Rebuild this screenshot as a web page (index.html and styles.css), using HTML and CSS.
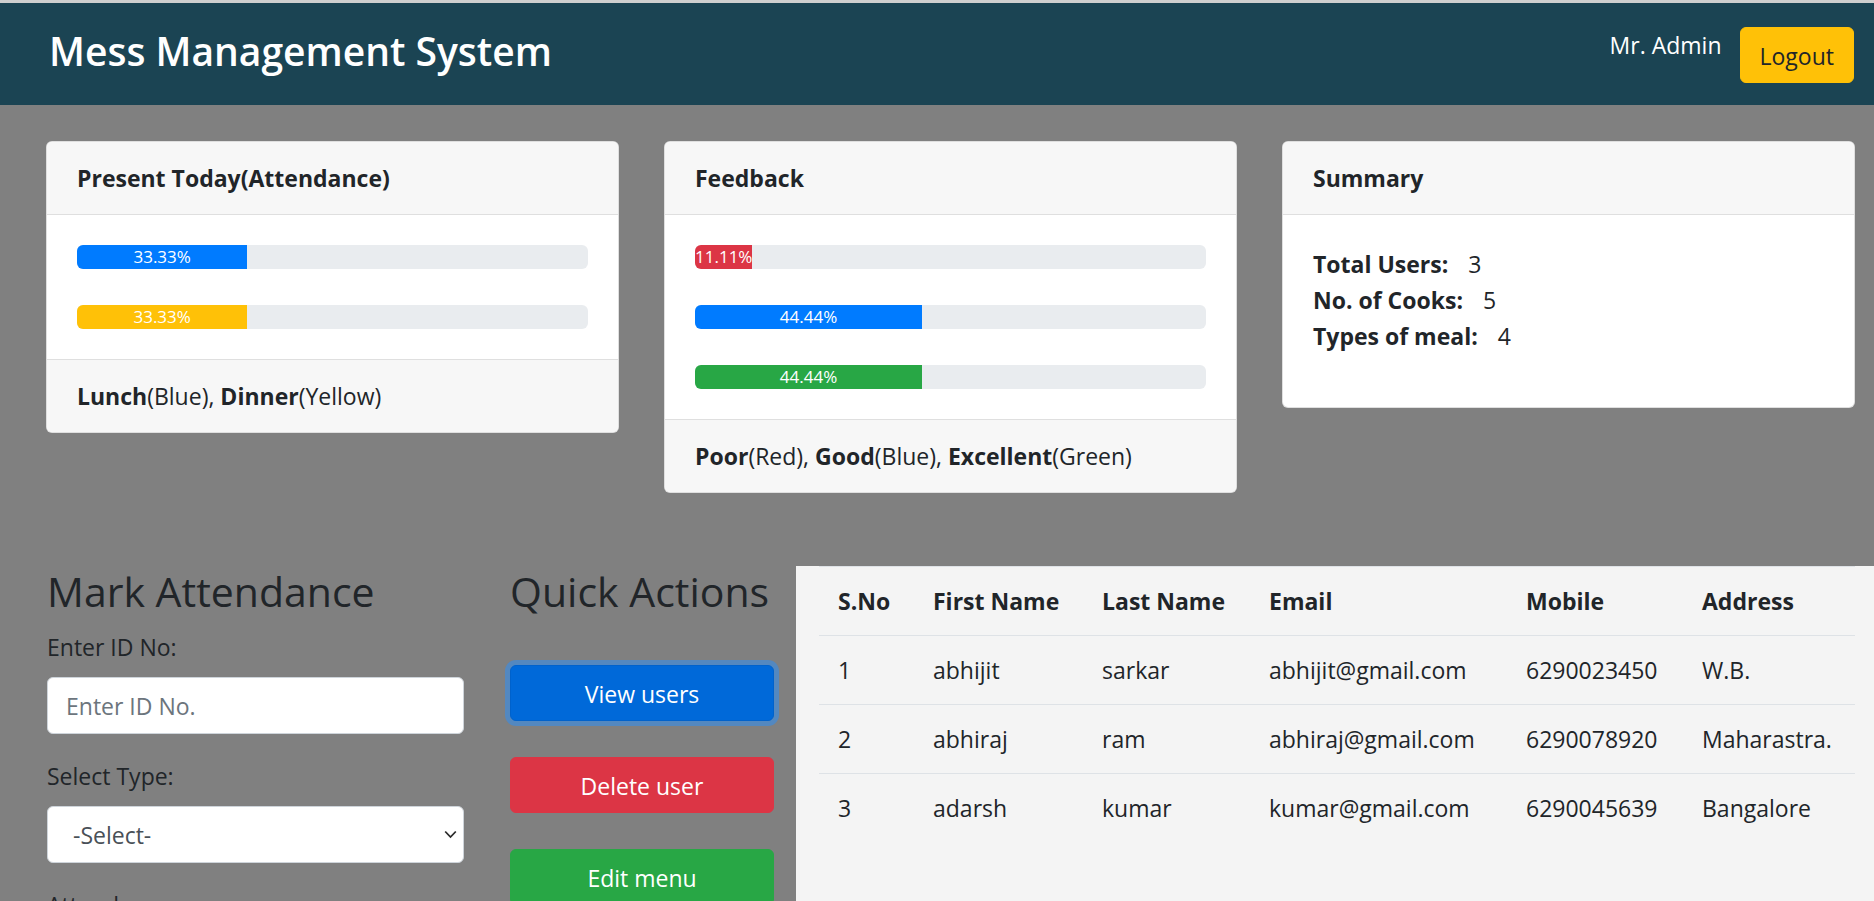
FILE: index.html
```html
<!DOCTYPE html>
<html lang="en">
<head>
<meta charset="utf-8">
<title>Mess Management System</title>
<link rel="stylesheet" href="styles.css">
</head>
<body>
<nav class="topbar">
  <div class="brand">Mess Management System</div>
  <div class="nav-right">
    <span class="admin">Mr. Admin</span>
    <button class="btn btn-warning">Logout</button>
  </div>
</nav>

<main class="page">
  <section class="cards">
    <div class="card">
      <div class="card-header">Present Today(Attendance)</div>
      <div class="card-body">
        <div class="progress"><div class="bar bar-blue" style="width:33.33%">33.33%</div></div>
        <div class="progress"><div class="bar bar-yellow" style="width:33.33%">33.33%</div></div>
      </div>
      <div class="card-footer"><b>Lunch</b>(Blue), <b>Dinner</b>(Yellow)</div>
    </div>

    <div class="card">
      <div class="card-header">Feedback</div>
      <div class="card-body">
        <div class="progress"><div class="bar bar-red" style="width:11.11%">11.11%</div></div>
        <div class="progress"><div class="bar bar-blue" style="width:44.44%">44.44%</div></div>
        <div class="progress"><div class="bar bar-green" style="width:44.44%">44.44%</div></div>
      </div>
      <div class="card-footer"><b>Poor</b>(Red), <b>Good</b>(Blue), <b>Excellent</b>(Green)</div>
    </div>

    <div class="card">
      <div class="card-header">Summary</div>
      <div class="card-body">
        <p class="stats">
          <span class="stat"><b class="stat-label">Total Users:</b>3</span>
          <span class="stat"><b class="stat-label">No. of Cooks:</b>5</span>
          <span class="stat"><b class="stat-label">Types of meal:</b>4</span>
        </p>
      </div>
    </div>
  </section>

  <section class="lower">
    <div class="attendance">
      <h2 class="heading">Mark Attendance</h2>
      <label class="label" for="idno">Enter ID No:</label>
      <input class="field" id="idno" type="text" placeholder="Enter ID No.">
      <label class="label" for="type">Select Type:</label>
      <div class="select-wrap">
        <select class="field select" id="type"><option>-Select-</option></select>
        <svg class="chev" width="13" height="9" viewBox="0 0 13 9"><polyline points="1.2,1.5 6.5,7 11.8,1.5" fill="none" stroke="#2b2b2b" stroke-width="1.8"/></svg>
      </div>
      <label class="label">Attendance:</label>
    </div>

    <div class="actions">
      <h2 class="heading">Quick Actions</h2>
      <button class="btn btn-primary is-focused">View users</button>
      <button class="btn btn-danger">Delete user</button>
      <button class="btn btn-success">Edit menu</button>
    </div>

    <div class="table-panel">
      <table class="users">
        <colgroup>
          <col class="c-sno"><col class="c-first"><col class="c-last"><col class="c-email"><col class="c-mobile"><col class="c-addr">
        </colgroup>
        <thead>
          <tr><th>S.No</th><th>First Name</th><th>Last Name</th><th>Email</th><th>Mobile</th><th>Address</th></tr>
        </thead>
        <tbody>
          <tr><td>1</td><td>abhijit</td><td>sarkar</td><td>abhijit@gmail.com</td><td>6290023450</td><td>W.B.</td></tr>
          <tr><td>2</td><td>abhiraj</td><td>ram</td><td>abhiraj@gmail.com</td><td>6290078920</td><td>Maharastra.</td></tr>
          <tr><td>3</td><td>adarsh</td><td>kumar</td><td>kumar@gmail.com</td><td>6290045639</td><td>Bangalore</td></tr>
        </tbody>
      </table>
    </div>
  </section>
</main>
</body>
</html>
```

FILE: styles.css
```css
* { box-sizing: border-box; }

html, body {
  margin: 0;
  padding: 0;
}

body {
  background: #808080;
  font-family: "Open Sans", "Noto Sans", sans-serif;
  font-size: 23px;
  line-height: 36px;
  color: #212529;
  overflow: hidden;
}

/* ---------- top bar ---------- */
.topbar {
  height: 105px;
  border-top: 3px solid #cfcfcf;
  background: #1b4453;
  display: flex;
  justify-content: space-between;
  align-items: flex-start;
  padding: 24px 20px 0 49px;
}

.brand {
  color: #fff;
  font-size: 39px;
  font-weight: 600;
  line-height: 48px;
  white-space: nowrap;
}

.nav-right {
  display: flex;
  align-items: flex-start;
  gap: 18px;
}

.admin {
  color: #fff;
  line-height: 36px;
}

/* ---------- buttons ---------- */
.btn {
  font-family: inherit;
  font-size: 23px;
  line-height: 36px;
  border: 1px solid transparent;
  border-radius: 6px;
  padding: 10px 19px 8px;
  text-align: center;
  cursor: pointer;
  white-space: nowrap;
}

.btn-warning { background: #ffc107; border-color: #ffc107; color: #212529; }
.btn-primary { background: #007bff; border-color: #007bff; color: #fff; }
.btn-danger  { background: #dc3545; border-color: #dc3545; color: #fff; }
.btn-success { background: #28a745; border-color: #28a745; color: #fff; }

.btn-primary.is-focused {
  background: #0069d9;
  border-color: #0062cc;
  box-shadow: 0 0 0 5px rgba(38, 143, 255, 0.5);
}

/* ---------- cards ---------- */
.cards {
  display: grid;
  grid-template-columns: repeat(3, 1fr);
  column-gap: 45px;
  align-items: start;
  padding: 36px 19px 0 46px;
}

.card {
  background: #fff;
  border: 1px solid rgba(0, 0, 0, 0.125);
  border-radius: 6px;
  overflow: hidden;
}

.card-header {
  background: #f7f7f7;
  border-bottom: 1px solid #dfdfdf;
  padding: 18px 30px;
  font-weight: 700;
}

.card-body {
  padding: 30px;
  display: flex;
  flex-direction: column;
  gap: 36px;
}

.card-footer {
  background: #f7f7f7;
  border-top: 1px solid #dfdfdf;
  padding: 18px 30px;
}

.progress {
  height: 24px;
  background: #e9ecef;
  border-radius: 6px;
  overflow: hidden;
  display: flex;
  font-size: 17px;
  line-height: 24px;
}

.bar {
  height: 100%;
  color: #fff;
  text-align: center;
  white-space: nowrap;
  overflow: hidden;
}

.bar-blue   { background: #007bff; }
.bar-yellow { background: #ffc107; }
.bar-red    { background: #dc3545; }
.bar-green  { background: #28a745; }

.stats {
  margin: 1px 0 23px;
  display: flex;
  flex-direction: column;
}

.stat-label {
  margin-right: 20px;
}

/* ---------- lower section ---------- */
.lower {
  display: flex;
  align-items: flex-start;
  margin-top: 73px;
  padding-left: 47px;
}

.heading {
  margin: 0 0 13px;
  font-size: 41px;
  line-height: 50px;
  font-weight: 500;
  color: #212529;
  white-space: nowrap;
}

.attendance {
  flex: none;
  width: 417px;
}

.label {
  display: block;
  margin-bottom: 12px;
}

.field {
  display: block;
  width: 100%;
  height: 57px;
  margin: 0 0 24px;
  padding: 9px 18px;
  font-family: inherit;
  font-size: 23px;
  line-height: 36px;
  color: #495057;
  background: #fff;
  border: 1px solid #ced4da;
  border-radius: 6px;
}

.field::placeholder { color: #6c757d; }

.select-wrap { position: relative; }

.select {
  -webkit-appearance: none;
  appearance: none;
  padding-left: 25px;
}

.chev {
  position: absolute;
  right: 7px;
  top: 24px;
}

.actions {
  flex: none;
  width: 264px;
  margin-left: 46px;
  display: flex;
  flex-direction: column;
}

.actions .btn {
  display: block;
  width: 100%;
  margin-top: 36px;
}

/* ---------- table ---------- */
.table-panel {
  flex: 1;
  margin-left: 22px;
  min-height: 420px;
  background: #f4f4f4;
  padding: 0 19px 0 23px;
}

.users {
  width: 100%;
  border-collapse: collapse;
  table-layout: fixed;
}

.users th,
.users td {
  padding: 16px 19px;
  border-top: 1px solid #dee2e6;
  text-align: left;
  vertical-align: top;
  line-height: 36px;
  white-space: nowrap;
}

.users th { font-weight: 700; }

.c-sno    { width: 95px; }
.c-first  { width: 169px; }
.c-last   { width: 167px; }
.c-email  { width: 257px; }
.c-mobile { width: 176px; }
.c-addr   { width: 172px; }
```
